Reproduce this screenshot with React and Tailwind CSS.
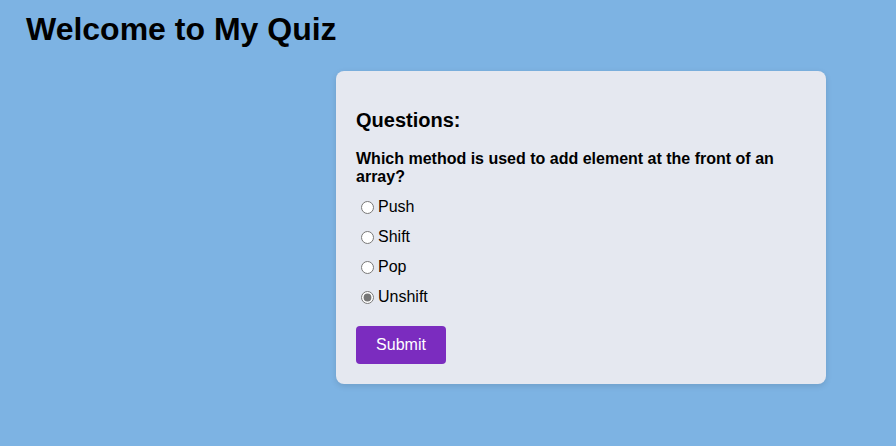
import React, { useState } from "react";

export default function App() {
  const [sel, setSel] = useState("Unshift");
  const opts = ["Push", "Shift", "Pop", "Unshift"];
  return (
    <div className="min-h-[446px] w-full bg-[#7db3e3] pl-[26px] pt-[11px] text-black" style={{ fontFamily: '"Liberation Sans", Arial, sans-serif' }}>
      <h1 className="text-[32px] font-bold leading-[37px]">Welcome to My Quiz</h1>
      <div className="ml-[310px] mt-[23px] w-[490px] rounded-[8px] bg-[#e5e8f0] px-[20px] pt-[38px] pb-[20px] shadow-[0_2px_6px_rgba(0,0,0,0.12)]">
        <h2 className="text-[20px] font-bold leading-[23px]">Questions:</h2>
        <p className="mt-[18px] text-[16px] font-bold leading-[18px]">Which method is used to add element at the front of an array?</p>
        <div className="mt-[6px] flex flex-col">
          {opts.map((o) => (
            <label key={o} className="flex h-[30px] items-center text-[16px]">
              <input
                type="radio"
                name="q"
                checked={sel === o}
                onChange={() => setSel(o)}
                className="ml-[5px] mr-[4px] h-[13px] w-[13px] accent-[#767676]"
              />
              {o}
            </label>
          ))}
        </div>
        <button className="mt-[14px] h-[38px] w-[90px] rounded-[4px] bg-[#7b2cbf] text-[16px] text-white">Submit</button>
      </div>
    </div>
  );
}
